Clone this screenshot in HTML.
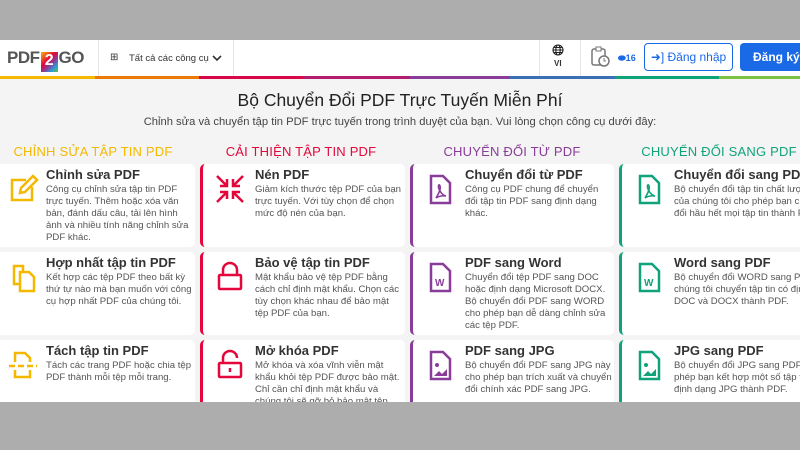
<!DOCTYPE html><html><head><meta charset="utf-8"><style>
*{margin:0;padding:0;box-sizing:border-box}
body{width:800px;height:450px;overflow:hidden;background:#f4f4f4;font-family:"Liberation Sans",sans-serif;position:relative;color:#333}
.top{position:absolute;left:0;top:0;width:800px;height:40px;background:#adadad}
.bot{position:absolute;left:0;top:402px;width:800px;height:48px;background:#adadad}
.hdr{position:absolute;left:0;top:40px;width:800px;height:36px;background:#fff}
.stripe{position:absolute;top:76px;height:3px}
.vl{position:absolute;top:40px;height:36px;width:1px;background:#e6e6e6}
.h1{position:absolute;top:90px;width:800px;text-align:center;font-size:17.5px;color:#222}
.sub{position:absolute;top:116px;width:800px;text-align:center;font-size:11.2px;color:#444}
.sec{position:absolute;top:144px;font-size:13px;text-align:center;width:200px;letter-spacing:.2px}
.card{position:absolute;background:#fff;border-radius:5px;border-left:3px solid}
.card b{position:absolute;left:52px;top:3px;font-size:13px;font-weight:bold;color:#333;white-space:nowrap}
.card p{position:absolute;left:52px;top:20px;width:148px;font-size:9.6px;line-height:12px;color:#555}
.card svg{position:absolute;left:10px;top:8px}
</style></head><body>
<div class="top"></div>
<div class="hdr"></div>
<div style="position:absolute;left:7px;top:48px;font-size:17px;font-weight:bold;color:#555;letter-spacing:-.5px">PDF<span style="display:inline-block;width:17px;height:20px;background:linear-gradient(135deg,#f5b800,#e3073c 40%,#8a3c99 60%,#2a9fd6 80%,#6cbf3a);color:#fff;text-align:center;margin:0 1px;vertical-align:-2px;font-size:16px">2</span>GO</div>
<div class="vl" style="left:98px"></div><div class="vl" style="left:233px"></div>
<div style="position:absolute;left:110px;top:52px;font-size:10px;color:#333">⊞</div>
<div style="position:absolute;left:129px;top:53px;font-size:9.5px;color:#333;white-space:nowrap">Tất cả các công cụ</div>
<svg style="position:absolute;left:212px;top:55px" width="10" height="7"><path d="M1 1l4 4 4-4" stroke="#333" stroke-width="1.6" fill="none"/></svg>
<div class="vl" style="left:539px"></div><div class="vl" style="left:580px"></div>
<svg style="position:absolute;left:552px;top:44px" width="12" height="12" fill="none" stroke="#222" stroke-width="1.1"><circle cx="6" cy="6" r="5"/><ellipse cx="6" cy="6" rx="2.2" ry="5"/><path d="M1 6h10M2 3.5h8M2 8.5h8"/></svg>
<div style="position:absolute;left:554px;top:59px;font-size:8px;font-weight:bold">VI</div>
<svg style="position:absolute;left:590px;top:46px" width="20" height="22"><rect x="2" y="3" width="13" height="16" rx="2" fill="none" stroke="#777" stroke-width="1.5"/><rect x="6" y="1" width="5" height="4" fill="#fff" stroke="#777"/><circle cx="14" cy="15" r="5" fill="#fff" stroke="#777" stroke-width="1.5"/><path d="M14 12v3h2" stroke="#777" fill="none"/></svg>
<div style="position:absolute;left:618px;top:53px;font-size:9px;color:#1a6ae8;font-weight:bold">⬬16</div>
<div style="position:absolute;left:644px;top:43px;width:89px;height:28px;border:1px solid #1a6ae8;border-radius:4px;color:#1a6ae8;font-size:12px;text-align:center;line-height:26px">➜] Đăng nhập</div>
<div style="position:absolute;left:740px;top:43px;width:70px;height:28px;background:#1a6ae8;border-radius:4px;color:#fff;font-size:12px;line-height:28px;padding-left:13px;font-weight:bold">Đăng ký</div>
<div class="stripe" style="left:0;width:95px;background:#f5b800"></div>
<div class="stripe" style="left:95px;width:104px;background:#ec7a08"></div>
<div class="stripe" style="left:199px;width:104px;background:#d9074a"></div>
<div class="stripe" style="left:303px;width:107px;background:#b31c6e"></div>
<div class="stripe" style="left:410px;width:100px;background:#8a3c99"></div>
<div class="stripe" style="left:510px;width:105px;background:#3a6fb5"></div>
<div class="stripe" style="left:615px;width:104px;background:#10a37a"></div>
<div class="stripe" style="left:719px;width:81px;background:#7dc143"></div>
<div class="h1">Bộ Chuyển Đổi PDF Trực Tuyến Miễn Phí</div>
<div class="sub">Chỉnh sửa và chuyển tập tin PDF trực tuyến trong trình duyệt của bạn. Vui lòng chọn công cụ dưới đây:</div>
<div class="sec" style="left:-7px;color:#f5b800">CHỈNH SỬA TẬP TIN PDF</div>
<div class="sec" style="left:201px;color:#e3073c">CẢI THIỆN TẬP TIN PDF</div>
<div class="sec" style="left:412px;color:#8a3c99">CHUYỂN ĐỔI TỪ PDF</div>
<div class="sec" style="left:619px;color:#10a37a">CHUYỂN ĐỔI SANG PDF</div>

<div class="card" style="left:-9px;top:164px;width:204px;height:83px;border-color:#f5b800"><svg width="34" height="34" viewBox="0 0 34 34" fill="none" stroke="#f5b800" stroke-width="2.5" style="left:12px"><path d="M20 8H6v20h20V15"/><path d="M14 21l1-5 12-12 4 4-12 12z"/></svg><b>Chỉnh sửa PDF</b><p>Công cụ chỉnh sửa tập tin PDF trực tuyến. Thêm hoặc xóa văn bản, đánh dấu câu, tải lên hình ảnh và nhiều tính năng chỉnh sửa PDF khác.</p></div>
<div class="card" style="left:-9px;top:252px;width:204px;height:83px;border-color:#f5b800"><svg width="34" height="34" viewBox="0 0 34 34" fill="none" stroke="#f5b800" stroke-width="2.5" style="left:14px"><path d="M6 6h9v18H6z"/><path d="M12 12h9l5 5v14H12z" fill="#fff"/></svg><b>Hợp nhất tập tin PDF</b><p>Kết hợp các tệp PDF theo bất kỳ thứ tự nào mà bạn muốn với công cụ hợp nhất PDF của chúng tôi.</p></div>
<div class="card" style="left:-9px;top:340px;width:204px;height:83px;border-color:#f5b800"><svg width="34" height="34" viewBox="0 0 34 34" fill="none" stroke="#f5b800" stroke-width="2.5" style="left:12px"><path d="M9 14V5h10l5 5v4M9 22v7h15v-7"/><path d="M3 18h28" stroke-dasharray="6 3"/></svg><b>Tách tập tin PDF</b><p>Tách các trang PDF hoặc chia tệp PDF thành mỗi tệp mỗi trang.</p></div>

<div class="card" style="left:200px;top:164px;width:205px;height:83px;border-color:#e3073c"><svg width="34" height="34" viewBox="0 0 34 34" fill="none" stroke="#e3073c" stroke-width="2.5"><path d="M4 4l10 10M14 7v7H7M30 4L20 14M20 7v7h7M4 30l10-10M14 27v-7H7M30 30L20 20M20 27v-7h7"/></svg><b>Nén PDF</b><p>Giảm kích thước tệp PDF của bạn trực tuyến. Với tùy chọn để chọn mức độ nén của bạn.</p></div>
<div class="card" style="left:200px;top:252px;width:205px;height:83px;border-color:#e3073c"><svg width="34" height="34" viewBox="0 0 34 34" fill="none" stroke="#e3073c" stroke-width="2.5"><rect x="6" y="15" width="22" height="14" rx="1"/><path d="M10 15V10a7 7 0 0114 0v5"/></svg><b>Bảo vệ tập tin PDF</b><p>Mật khẩu bảo vệ tệp PDF bằng cách chỉ định mật khẩu. Chọn các tùy chọn khác nhau để bảo mật tệp PDF của bạn.</p></div>
<div class="card" style="left:200px;top:340px;width:205px;height:83px;border-color:#e3073c"><svg width="34" height="34" viewBox="0 0 34 34" fill="none" stroke="#e3073c" stroke-width="2.5"><rect x="6" y="15" width="22" height="14" rx="1"/><path d="M10 15V10a7 7 0 0114 0M17 20v4"/></svg><b>Mở khóa PDF</b><p>Mở khóa và xóa vĩnh viễn mật khẩu khỏi tệp PDF được bảo mật. Chỉ cần chỉ định mật khẩu và chúng tôi sẽ gỡ bỏ bảo mật tệp PDF.</p></div>

<div class="card" style="left:410px;top:164px;width:204px;height:83px;border-color:#8a3c99"><svg width="34" height="34" viewBox="0 0 34 34" fill="none" stroke="#8a3c99" stroke-width="2.5"><path d="M8 4h12l7 7v20H8z"/><path d="M13 26c3-5 5-9 4-12s-3 0 0 5 6 5 6 5-6-1-10 2" stroke-width="1.6"/></svg><b>Chuyển đổi từ PDF</b><p>Công cụ PDF chung để chuyển đổi tập tin PDF sang định dạng khác.</p></div>
<div class="card" style="left:410px;top:252px;width:204px;height:83px;border-color:#8a3c99"><svg width="34" height="34" viewBox="0 0 34 34" fill="none" stroke="#8a3c99" stroke-width="2.5"><path d="M8 4h12l7 7v20H8z"/><text x="12" y="26" font-size="10" font-weight="bold" fill="#8a3c99" stroke="none" font-family="Liberation Sans">W</text></svg><b>PDF sang Word</b><p>Chuyển đổi tệp PDF sang DOC hoặc định dạng Microsoft DOCX. Bộ chuyển đổi PDF sang WORD cho phép bạn dễ dàng chỉnh sửa các tệp PDF.</p></div>
<div class="card" style="left:410px;top:340px;width:204px;height:83px;border-color:#8a3c99"><svg width="34" height="34" viewBox="0 0 34 34" fill="none" stroke="#8a3c99" stroke-width="2.5"><path d="M8 4h12l7 7v20H8z"/><path d="M11 28l5-5 3 3 5-5v7z" fill="#8a3c99" stroke="none"/><circle cx="14" cy="17" r="2" fill="#8a3c99" stroke="none"/></svg><b>PDF sang JPG</b><p>Bộ chuyển đổi PDF sang JPG này cho phép bạn trích xuất và chuyển đổi chính xác PDF sang JPG.</p></div>

<div class="card" style="left:619px;top:164px;width:205px;height:83px;border-color:#10a37a"><svg width="34" height="34" viewBox="0 0 34 34" fill="none" stroke="#10a37a" stroke-width="2.5"><path d="M8 4h12l7 7v20H8z"/><path d="M13 26c3-5 5-9 4-12s-3 0 0 5 6 5 6 5-6-1-10 2" stroke-width="1.6"/></svg><b>Chuyển đổi sang PDF</b><p style="width:160px">Bộ chuyển đổi tập tin chất lượng cao của chúng tôi cho phép bạn chuyển đổi hầu hết mọi tập tin thành PDF.</p></div>
<div class="card" style="left:619px;top:252px;width:205px;height:83px;border-color:#10a37a"><svg width="34" height="34" viewBox="0 0 34 34" fill="none" stroke="#10a37a" stroke-width="2.5"><path d="M8 4h12l7 7v20H8z"/><text x="12" y="26" font-size="10" font-weight="bold" fill="#10a37a" stroke="none" font-family="Liberation Sans">W</text></svg><b>Word sang PDF</b><p style="width:160px">Bộ chuyển đổi WORD sang PDF của chúng tôi chuyển tập tin có định dạng DOC và DOCX thành PDF.</p></div>
<div class="card" style="left:619px;top:340px;width:205px;height:83px;border-color:#10a37a"><svg width="34" height="34" viewBox="0 0 34 34" fill="none" stroke="#10a37a" stroke-width="2.5"><path d="M8 4h12l7 7v20H8z"/><path d="M11 28l5-5 3 3 5-5v7z" fill="#10a37a" stroke="none"/><circle cx="14" cy="17" r="2" fill="#10a37a" stroke="none"/></svg><b>JPG sang PDF</b><p style="width:160px">Bộ chuyển đổi JPG sang PDF cho phép bạn kết hợp một số tập tin có định dạng JPG thành PDF.</p></div>
<div class="bot"></div>
</body></html>
